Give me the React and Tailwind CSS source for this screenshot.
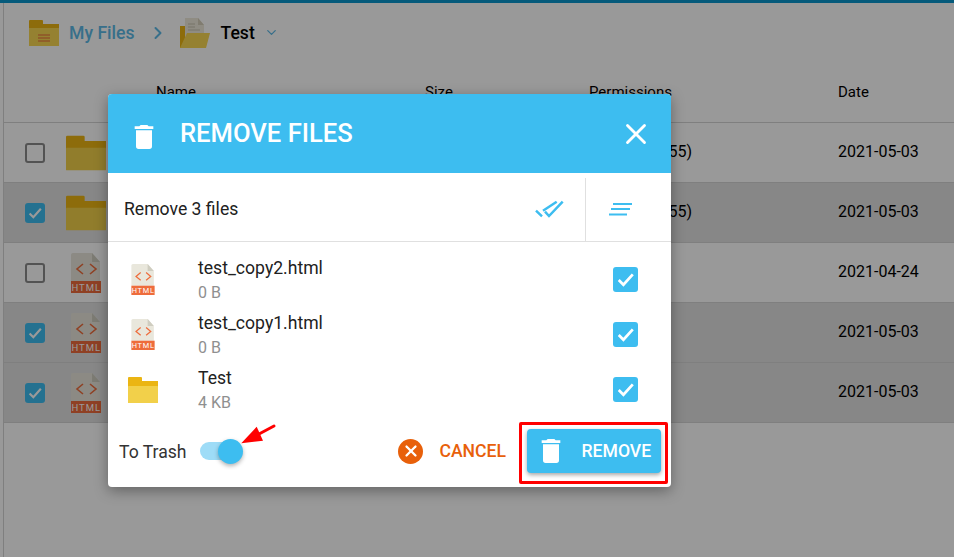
import { X, ChevronRight, ChevronDown } from "lucide-react";

const BLUE = "#3dbdf0";

function TrashIcon({ size = 32 }) {
  return (
    <svg width={size} height={size} viewBox="0 0 24 24" fill="white">
      <path d="M19,4H15.5L14.5,3H9.5L8.5,4H5V6H19M6,19A2,2 0 0,0 8,21H16A2,2 0 0,0 18,19V7H6V19Z" />
    </svg>
  );
}

function FolderIcon({ width = 30, height = 26 }) {
  return (
    <svg width={width} height={height} viewBox="0 0 30 26">
      <path d="M0 1q0-1 1-1h12q1 0 1 1v4h-14z" fill="#ebb513" />
      <rect x="0" y="4" width="30" height="6" fill="#ebb513" />
      <rect x="0" y="9" width="30" height="17" rx="0.5" fill="#f2d04a" />
    </svg>
  );
}

function HtmlIcon({ width = 30, height = 40 }) {
  return (
    <svg width={width} height={height} viewBox="0 0 30 40">
      <path d="M0 2q0-2 2-2h19l8 9v19h-29z" fill="#e9e7dc" />
      <path d="M21 0l8 9h-8z" fill="#cfcdc0" />
      <path d="M12 11l-6 5 6 5M19 11l6 5-6 5" fill="none" stroke="#ee6c3c" strokeWidth="1.6" />
      <rect x="0" y="28" width="30" height="12" fill="#ee6c3c" />
      <text x="15.3" y="37.6" textAnchor="middle" fill="white" fontSize="9.5" letterSpacing="1" fontFamily="Roboto, sans-serif">
        HTML
      </text>
    </svg>
  );
}

function Checkbox({ checked, size = 20 }) {
  if (!checked) {
    return <div className="w-5 h-5 rounded-[3px] border-2 border-[#8a8a8a]" />;
  }
  return (
    <div className="flex items-center justify-center rounded-[3px] bg-[#3dbdf0]" style={{ width: size, height: size }}>
      <svg width={size} height={size} viewBox="0 0 24 24" fill="none" stroke="white" strokeWidth="2.6">
        <path d="M5.5 12.5l4.5 4.5 9-10" />
      </svg>
    </div>
  );
}

const rows = [
  { name: "Test", type: "folder", size: "4 KB", perms: "rwxr-xr-x (755)", date: "2021-05-03", checked: false },
  { name: "Test", type: "folder", size: "4 KB", perms: "rwxr-xr-x (755)", date: "2021-05-03", checked: true },
  { name: "test.html", type: "html", size: "0 B", perms: "rw-r--r--", date: "2021-04-24", checked: false },
  { name: "test_copy1.html", type: "html", size: "0 B", perms: "rw-r--r--", date: "2021-05-03", checked: true },
  { name: "test_copy2.html", type: "html", size: "0 B", perms: "rw-r--r--", date: "2021-05-03", checked: true },
];

const dialogFiles = [
  { name: "test_copy2.html", size: "0 B", type: "html" },
  { name: "test_copy1.html", size: "0 B", type: "html" },
  { name: "Test", size: "4 KB", type: "folder" },
];

function Breadcrumb() {
  return (
    <div className="flex items-center h-[59px] pl-[25px]">
      <svg width="30" height="26" viewBox="0 0 30 26">
        <path d="M0 1q0-1 1-1h12q1 0 1 1v4h-14z" fill="#ebb513" />
        <rect x="0" y="4" width="30" height="6" fill="#ebb513" />
        <rect x="0" y="8" width="30" height="18" fill="#f9d752" />
        <path d="M9 15h12M9 18h12M9 21h12" stroke="#e8663a" strokeWidth="1" />
      </svg>
      <span className="ml-[10px] mt-[1px] text-[17.6px] font-medium text-[#5cb9e6]">My Files</span>
      <ChevronRight size={20} strokeWidth={2.4} className="ml-[13px] text-[#5cb9e6]" />
      <svg width="30" height="30" viewBox="0 0 30 30" className="ml-[12px]">
        <path d="M0 8h6v22h-6z" fill="#ebb513" />
        <path d="M5 0h13l6 7v12h-19z" fill="#efeadb" />
        <path d="M18 0l6 7h-6z" fill="#d5cfbb" />
        <path d="M8 6h7M8 9h7M8 12h12" stroke="#c5c0ae" strokeWidth="1" />
        <path d="M7 15h23l-4 15h-26z" fill="#f9d752" />
      </svg>
      <span className="ml-[11px] mt-[1px] text-[17.6px] font-medium text-black">Test</span>
      <ChevronDown size={15} strokeWidth={2} className="ml-[9px] text-[#5cb9e6]" />
    </div>
  );
}

function FileTable() {
  return (
    <div>
      <div className="grid grid-cols-[152px_269px_164px_249px_1fr] items-center h-[60px] text-[15px] text-black">
        <span />
        <span>Name</span>
        <span>Size</span>
        <span>Permissions</span>
        <span>Date</span>
      </div>
      {rows.map((row, i) => (
        <div
          key={i}
          className={`grid grid-cols-[152px_269px_164px_249px_1fr] items-center h-[60px] border-t border-[#d4d4d4] text-[16px] text-black ${row.checked ? "bg-[#e2e2e2]" : ""}`}
        >
          <div className="flex items-center pl-[21px] gap-[21px]">
            <Checkbox checked={row.checked} />
            <div className="w-10 flex justify-center">
              {row.type === "folder" ? <FolderIcon width={40} height={36} /> : <HtmlIcon />}
            </div>
          </div>
          <span className="pb-[1px]">{row.name}</span>
          <span className="pb-[1px]">{row.size}</span>
          <span className="pb-[1px]">{row.perms}</span>
          <span className="pb-[1px]">{row.date}</span>
        </div>
      ))}
      <div className="border-t border-[#d4d4d4]" />
    </div>
  );
}

function RemoveDialog() {
  return (
    <div className="w-[563px] h-[393px] flex flex-col bg-white rounded-[4px] overflow-hidden shadow-[0_4px_14px_rgba(0,0,0,0.35)]">
      <div className="flex items-center h-[79px] shrink-0 bg-[#3dbdf0] pl-[20px] pr-[18px]">
        <div className="mt-[6px]">
          <TrashIcon />
        </div>
        <h2 className="ml-[20px] text-[25.6px] font-medium text-white">REMOVE FILES</h2>
        <X size={34} strokeWidth={2} className="ml-auto text-white" />
      </div>

      <div className="flex h-[69px] shrink-0 border-b border-[#e0e0e0]">
        <div className="flex-1 flex items-center pl-[16px] pr-[19px] pt-[3px]">
          <span className="mt-[1px] text-[17.6px] text-[#212121]">Remove 3 files</span>
          <svg width="32" height="18" viewBox="0 0 32 18" className="ml-auto mt-[1px]">
            <g fill="none" stroke={BLUE} strokeWidth="2.5">
              <path d="M2 10.7l6 5.6M9 10.7l13.7-9" />
              <path d="M11 11.7l4 4.3 13.7-14.3" />
            </g>
          </svg>
        </div>
        <div className="w-[86px] mt-[5px] border-l border-[#e0e0e0] flex items-center pl-[23px]">
          <svg width="24" height="15" viewBox="0 0 24 15">
            <g fill="none" stroke={BLUE} strokeWidth="2.2">
              <path d="M4 2h19M2 7h19M0 12.5h18" />
            </g>
          </svg>
        </div>
      </div>

      <div className="flex-1 pt-[10px]">
        {dialogFiles.map((file) => (
          <div key={file.name} className="flex items-center h-[55px] pl-[20px] pr-[33px]">
            <div className="w-[30px] flex justify-center">
              {file.type === "html" ? <HtmlIcon width={24} height={31} /> : <FolderIcon />}
            </div>
            <div className="ml-[40px] flex-1 pt-[2px]">
              <div className="text-[17.6px] leading-[24px] text-[#212121]">{file.name}</div>
              <div className="mt-[1px] text-[16px] leading-[24px] text-[#8f8f8f]">{file.size}</div>
            </div>
            <Checkbox checked size={25} />
          </div>
        ))}
      </div>

      <div className="flex items-center h-[70px] shrink-0 pl-[11px] pr-[3px] pt-[5px] pb-[3px]">
        <span className="mb-[2px] text-[17.6px] text-[#333]">To Trash</span>
        <div className="relative mb-[4px] ml-[13px] w-[43px] h-[25px] flex items-center">
          <div className="w-[36px] h-[18px] rounded-full bg-[#9edcf7]" />
          <div className="absolute right-0 top-0 w-[25px] h-[25px] rounded-full bg-[#3dbdf0] shadow-[0_2px_4px_rgba(0,0,0,0.3)]" />
          <svg width="45" height="30" viewBox="0 0 45 30" className="absolute left-[35px] top-[-20px]">
            <path d="M39 7L24 15" stroke="#f00" strokeWidth="3" strokeLinecap="round" />
            <path d="M6.3 24.3L21.7 7.7L28 21.7z" fill="#f00" />
          </svg>
        </div>
        <div className="ml-auto mb-[3px] flex items-center">
          <div className="w-[25px] h-[25px] rounded-full bg-[#e8600a] flex items-center justify-center">
            <X size={18} strokeWidth={3} className="text-white" />
          </div>
          <span className="ml-[16px] text-[17.6px] font-medium text-[#e8600a]">CANCEL</span>
        </div>
        <div className="ml-[13px] w-[149px] h-[62px] pt-[4px] border-[3px] border-[#f00] rounded-[2px] flex items-start justify-center">
          <button className="flex items-center w-[134px] h-[44px] rounded-[4px] bg-[#3dbdf0] shadow-[0_2px_4px_rgba(0,0,0,0.35)] pl-[8px]">
            <TrashIcon size={32} />
            <span className="ml-[15px] text-[17.6px] font-medium text-white">REMOVE</span>
          </button>
        </div>
      </div>
    </div>
  );
}

export default function App() {
  return (
    <div className="relative h-[557px] overflow-hidden bg-white font-['Roboto',sans-serif]">
      <div className="h-[3px] bg-[#0996ce]" />
      <div className="ml-[3px] h-[554px] border-l border-[#d4d4d4]">
        <Breadcrumb />
        <FileTable />
      </div>
      <div className="absolute inset-0 bg-black/40 pl-[108px] pt-[94px]">
        <RemoveDialog />
      </div>
    </div>
  );
}
